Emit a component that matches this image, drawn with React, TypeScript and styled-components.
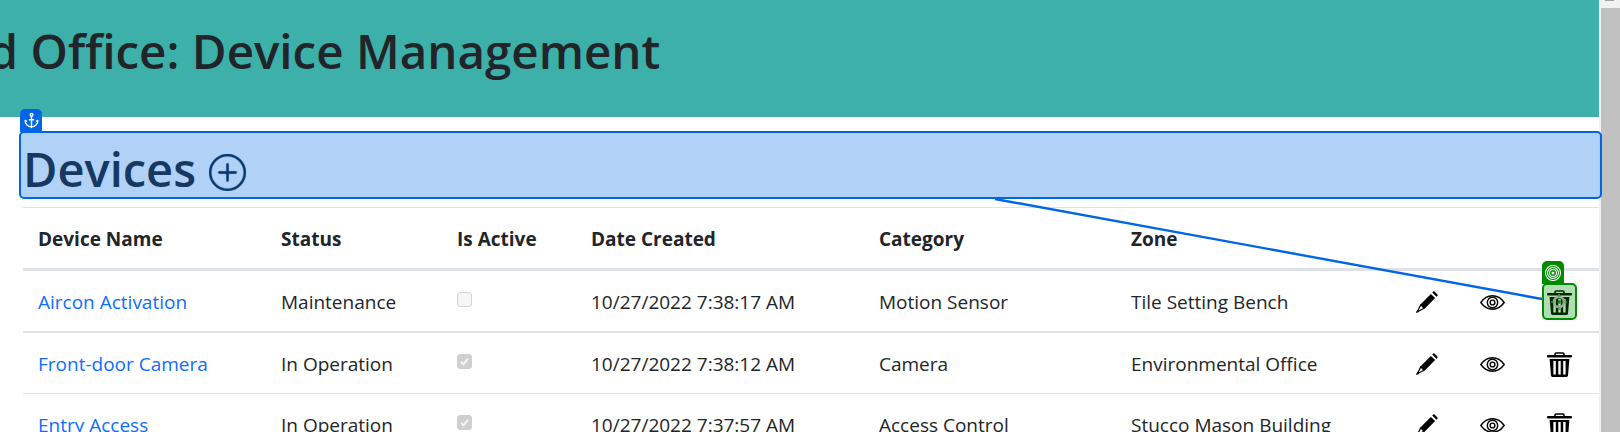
import React from 'react';
import { Anchor } from 'lucide-react';
import { BsBullseye, BsPlusCircle } from 'react-icons/bs';
import styled, { createGlobalStyle } from 'styled-components';

const GlobalStyle = createGlobalStyle`
  html, body {
    margin: 0;
    height: 432px;
    overflow: hidden;
    background: #fff;
  }
  body {
    font-family: "Open Sans", "Noto Sans", sans-serif;
    color: #212529;
  }
`;

const Viewport = styled.div`
  position: relative;
  display: flex;
  width: 1620px;
  height: 432px;
  overflow: hidden;
`;

const Page = styled.main`
  width: 1599px;
  flex: none;
`;

const ScrollTrack = styled.div`
  flex: 1;
  position: relative;
  background: #f1f1f1;
  padding: 8px 0 0 2px;
`;

const ScrollArrow = styled.div`
  position: absolute;
  top: 0;
  left: 6px;
  width: 9px;
  height: 1px;
  background: #a3a3a3;
`;

const ScrollThumb = styled.div`
  height: 100%;
  background: #c1c1c1;
`;

const Banner = styled.header`
  height: 117px;
  background: #3cb0a9;
  overflow: hidden;
  display: flex;
  align-items: center;
`;

const BannerTitle = styled.h1`
  flex: none;
  margin: 0 0 16px -102px;
  font-size: 47.5px;
  font-weight: 600;
  white-space: nowrap;
`;

const Content = styled.section`
  padding: 14px 0 0 23px;
`;

const SectionTitle = styled.h2`
  display: flex;
  align-items: center;
  gap: 13px;
  height: 76px;
  margin: 0;
  font-size: 47px;
  font-weight: 600;
`;

const AddIcon = styled(BsPlusCircle)`
  width: 37px;
  height: 37px;
  margin-top: 6px;
  color: #0a2540;
  stroke: currentColor;
  stroke-width: 0.15;
`;

const DeviceTable = styled.table`
  width: 1576px;
  table-layout: fixed;
  border-collapse: collapse;
  font-size: 19px;
`;

const Column = styled.col<{ $width: number }>`
  width: ${({ $width }) => $width}px;
`;

const HeaderCell = styled.th`
  height: 58px;
  padding: 2px 16px 0 15px;
  text-align: left;
  font-weight: 700;
  border-top: 1px solid #dee2e6;
  border-bottom: 3px solid #dee2e6;
`;

const BodyRow = styled.tr<{ $thick?: boolean }>`
  border-bottom: ${({ $thick }) => ($thick ? '2px' : '1px')} solid #dee2e6;
`;

const Cell = styled.td`
  height: 58px;
  padding: 2px 16px 0 15px;
  white-space: nowrap;
`;

const DeviceLink = styled.a`
  color: #0d6efd;
  text-decoration: none;
`;

const ActiveBox = styled.span<{ $checked: boolean }>`
  width: 15px;
  height: 15px;
  box-sizing: border-box;
  border-radius: 3px;
  margin-top: -6px;
  background: ${({ $checked }) => ($checked ? '#cfcfcf' : '#f6f6f6')};
  border: 1px solid ${({ $checked }) => ($checked ? '#cfcfcf' : '#d4d4d4')};
  color: #f4f4f4;
  display: flex;
  align-items: center;
  justify-content: center;
`;

const ActionIcon = styled.span`
  display: flex;
  width: 25px;
  height: 28px;
  align-items: center;
  justify-content: center;
  color: #000;
`;

// selection overlay, sits over the heading
const AnchorHandle = styled.div`
  position: absolute;
  left: 20px;
  top: 109px;
  width: 22px;
  height: 23px;
  background: #0066e6;
  border-radius: 5px 5px 0 0;
  color: #fff;
  display: flex;
  align-items: center;
  justify-content: center;
`;

const AnchorBox = styled.div`
  position: absolute;
  left: 19px;
  top: 131px;
  width: 1583px;
  height: 68px;
  box-sizing: border-box;
  border: 2px solid #0066e6;
  border-radius: 5px;
  background: rgba(0, 102, 230, 0.3);
`;

const ConnectorLine = styled.svg`
  position: absolute;
  left: 0;
  top: 0;
  pointer-events: none;
`;

const TargetHandle = styled.div`
  position: absolute;
  left: 1542px;
  top: 261px;
  width: 22px;
  height: 23px;
  background: #008a00;
  border-radius: 5px 5px 0 0;
  color: #fff;
  display: flex;
  align-items: center;
  justify-content: center;
`;

const TargetBox = styled.div`
  position: absolute;
  left: 1542px;
  top: 283px;
  width: 35px;
  height: 37px;
  box-sizing: border-box;
  border: 2px solid #008a00;
  border-radius: 5px;
  background: rgba(0, 138, 0, 0.3);
`;

const TargetMark = styled.svg`
  position: absolute;
  left: 1549px;
  top: 292px;
`;

const PencilIcon: React.FC = () => (
  <svg width="23" height="23" viewBox="0 0 24 24">
    <path d="M6 14.5L2.4 21.6L9.5 18Z" fill="#fff" stroke="#000" strokeWidth="1.3" strokeLinejoin="round" />
    <path d="M1 23L2.2 19.8L4.2 21.8Z" fill="#000" />
    <path d="M5.6 14L16.6 3L21 7.4L10 18.4Z" fill="#000" />
    <path d="M18 1.6L19 .6Q19.6 0 20.4 .6L23.4 3.6Q24 4.4 23.4 5L22.4 6Z" fill="#000" />
  </svg>
);

const EyeIcon: React.FC = () => (
  <svg width="25" height="15" viewBox="0 0 25 15" fill="none" stroke="#000" strokeWidth="1.4">
    <path d="M.8 7.5C4 3 8 .8 12.5 .8S21 3 24.2 7.5C21 12 17 14.2 12.5 14.2S4 12 .8 7.5Z" />
    <circle cx="12.5" cy="7.5" r="5.2" />
    <circle cx="12.5" cy="7.5" r="2.4" />
  </svg>
);

const TrashIcon: React.FC = () => (
  <svg width="25" height="25" viewBox="0 0 25 25">
    <path d="M8 3.5V2.2Q8 1 9.2 1H15.8Q17 1 17 2.2V3.5" fill="none" stroke="#000" strokeWidth="1.6" />
    <rect x="0" y="3" width="25" height="2.6" rx="1" fill="#000" />
    <path d="M2.6 7H22.4L21 23.6Q20.9 25 19.5 25H5.5Q4.1 25 4 23.6Z" fill="#000" />
    <rect x="6.4" y="9" width="2.4" height="13.5" fill="#fff" />
    <rect x="11.3" y="9" width="2.4" height="13.5" fill="#fff" />
    <rect x="16.2" y="9" width="2.4" height="13.5" fill="#fff" />
  </svg>
);

interface Device {
  name: string;
  status: string;
  active: boolean;
  created: string;
  category: string;
  zone: string;
}

const devices: Device[] = [
  { name: 'Aircon Activation', status: 'Maintenance', active: false, created: '10/27/2022 7:38:17 AM', category: 'Motion Sensor', zone: 'Tile Setting Bench' },
  { name: 'Front-door Camera', status: 'In Operation', active: true, created: '10/27/2022 7:38:12 AM', category: 'Camera', zone: 'Environmental Office' },
  { name: 'Entry Access', status: 'In Operation', active: true, created: '10/27/2022 7:37:57 AM', category: 'Access Control', zone: 'Stucco Mason Building' }
];

const columnWidths = [243, 176, 134, 288, 252, 283, 66, 67, 67];
const headings = ['Device Name', 'Status', 'Is Active', 'Date Created', 'Category', 'Zone', '', '', ''];

const App: React.FC = () => {
  return (
    <Viewport>
      <GlobalStyle />
      <Page>
        <Banner>
          <BannerTitle>Head Office: Device Management</BannerTitle>
        </Banner>
        <Content>
          <SectionTitle>
            Devices <AddIcon />
          </SectionTitle>
          <DeviceTable>
            <colgroup>
              {columnWidths.map((w, i) => (
                <Column key={i} $width={w} />
              ))}
            </colgroup>
            <thead>
              <tr>
                {headings.map((h, i) => (
                  <HeaderCell key={i}>{h}</HeaderCell>
                ))}
              </tr>
            </thead>
            <tbody>
              {devices.map((d, i) => (
                <BodyRow key={d.name} $thick={i === 0}>
                  <Cell>
                    <DeviceLink href="#">{d.name}</DeviceLink>
                  </Cell>
                  <Cell>{d.status}</Cell>
                  <Cell>
                    <ActiveBox $checked={d.active}>
                      {d.active && (
                        <svg width="11" height="11" viewBox="0 0 16 16" fill="none" stroke="currentColor" strokeWidth="3">
                          <path d="M3 8.5l3.5 3.5L13 4" />
                        </svg>
                      )}
                    </ActiveBox>
                  </Cell>
                  <Cell>{d.created}</Cell>
                  <Cell>{d.category}</Cell>
                  <Cell>{d.zone}</Cell>
                  <Cell>
                    <ActionIcon>
                      <PencilIcon />
                    </ActionIcon>
                  </Cell>
                  <Cell>
                    <ActionIcon>
                      <EyeIcon />
                    </ActionIcon>
                  </Cell>
                  <Cell>
                    <ActionIcon>
                      <TrashIcon />
                    </ActionIcon>
                  </Cell>
                </BodyRow>
              ))}
            </tbody>
          </DeviceTable>
        </Content>
      </Page>
      <ScrollTrack>
        <ScrollArrow />
        <ScrollThumb />
      </ScrollTrack>

      <AnchorHandle>
        <Anchor size={17} />
      </AnchorHandle>
      <AnchorBox />
      <ConnectorLine width="1620" height="432">
        <line x1="995" y1="199" x2="1542" y2="299" stroke="#0066e6" strokeWidth="2.4" />
      </ConnectorLine>
      <TargetHandle>
        <BsBullseye size={16} />
      </TargetHandle>
      <TargetBox />
      <TargetMark width="24" height="24" viewBox="0 0 24 24">
        <circle cx="10" cy="10" r="5" fill="none" stroke="#9aa89a" strokeWidth="2.6" />
        <circle cx="10" cy="10" r="1.7" fill="#008a00" />
        <path d="M10 2v2.5M10 15.5V18M2 10h2.5M15.5 10H18" stroke="#3f9a3f" strokeWidth="1.6" />
      </TargetMark>
    </Viewport>
  );
};

export default App;
